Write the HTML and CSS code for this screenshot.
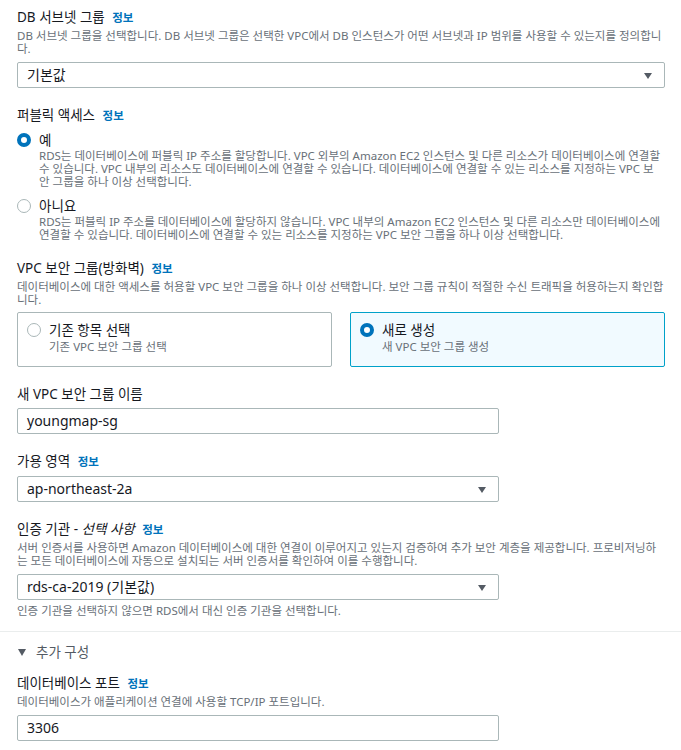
FILE: index.html
```html
<!DOCTYPE html>
<html lang="ko">
<head>
    <meta charset="UTF-8">
    <title>RDS 연결</title>
    <link rel="stylesheet" href="styles.css">
</head>
<body>
    <div class="form">
        <div class="field">
            <div class="label">DB 서브넷 그룹 <a class="info">정보</a></div>
            <div class="desc">DB 서브넷 그룹을 선택합니다. DB 서브넷 그룹은 선택한 VPC에서 DB 인스턴스가 어떤 서브넷과 IP 범위를 사용할 수 있는지를 정의합니다.</div>
            <div class="select wide">기본값<span class="caret"></span></div>
        </div>

        <div class="field">
            <div class="label">퍼블릭 액세스 <a class="info">정보</a></div>
            <div class="radio-item">
                <div class="radio-row"><span class="radio checked"></span>예</div>
                <div class="desc indent">RDS는 데이터베이스에 퍼블릭 IP 주소를 할당합니다. VPC 외부의 Amazon EC2 인스턴스 및 다른 리소스가 데이터베이스에 연결할 수 있습니다. VPC 내부의 리소스도 데이터베이스에 연결할 수 있습니다. 데이터베이스에 연결할 수 있는 리소스를 지정하는 VPC 보안 그룹을 하나 이상 선택합니다.</div>
            </div>
            <div class="radio-item">
                <div class="radio-row"><span class="radio"></span>아니요</div>
                <div class="desc indent">RDS는 퍼블릭 IP 주소를 데이터베이스에 할당하지 않습니다. VPC 내부의 Amazon EC2 인스턴스 및 다른 리소스만 데이터베이스에 연결할 수 있습니다. 데이터베이스에 연결할 수 있는 리소스를 지정하는 VPC 보안 그룹을 하나 이상 선택합니다.</div>
            </div>
        </div>

        <div class="field">
            <div class="label">VPC 보안 그룹(방화벽) <a class="info">정보</a></div>
            <div class="desc">데이터베이스에 대한 액세스를 허용할 VPC 보안 그룹을 하나 이상 선택합니다. 보안 그룹 규칙이 적절한 수신 트래픽을 허용하는지 확인합니다.</div>
            <div class="tiles">
                <div class="tile">
                    <span class="radio"></span>
                    <div>
                        <div class="tile-title">기존 항목 선택</div>
                        <div class="tile-sub">기존 VPC 보안 그룹 선택</div>
                    </div>
                </div>
                <div class="tile selected">
                    <span class="radio checked"></span>
                    <div>
                        <div class="tile-title">새로 생성</div>
                        <div class="tile-sub">새 VPC 보안 그룹 생성</div>
                    </div>
                </div>
            </div>
        </div>

        <div class="field">
            <div class="label">새 VPC 보안 그룹 이름</div>
            <div class="input">youngmap-sg</div>
        </div>

        <div class="field">
            <div class="label">가용 영역 <a class="info">정보</a></div>
            <div class="select">ap-northeast-2a<span class="caret"></span></div>
        </div>

        <div class="field last">
            <div class="label">인증 기관 - <i>선택 사항</i> <a class="info">정보</a></div>
            <div class="desc">서버 인증서를 사용하면 Amazon 데이터베이스에 대한 연결이 이루어지고 있는지 검증하여 추가 보안 계층을 제공합니다. 프로비저닝하는 모든 데이터베이스에 자동으로 설치되는 서버 인증서를 확인하여 이를 수행합니다.</div>
            <div class="select">rds-ca-2019 (기본값)<span class="caret"></span></div>
            <div class="hint">인증 기관을 선택하지 않으면 RDS에서 대신 인증 기관을 선택합니다.</div>
        </div>
    </div>

    <div class="expander">
        <div class="expander-head"><span class="tri"></span>추가 구성</div>
        <div class="field">
            <div class="label">데이터베이스 포트 <a class="info">정보</a></div>
            <div class="desc">데이터베이스가 애플리케이션 연결에 사용할 TCP/IP 포트입니다.</div>
            <div class="input">3306</div>
        </div>
    </div>
</body>
</html>
```
FILE: styles.css
```css
* { margin: 0; padding: 0; box-sizing: border-box; }
body {
    font-family: "Noto Sans", "Noto Sans CJK KR", sans-serif;
    background: #fff;
    color: #16191f;
    width: 681px;
}
.form {
    padding: 8px 17px 0 17px;
}
.field {
    margin-bottom: 18px;
}
.field.last {
    margin-bottom: 14px;
}
.label {
    font-size: 13.5px;
    line-height: 18px;
    color: #16191f;
}
.label i {
    font-style: italic;
}
.info {
    color: #0073bb;
    font-weight: bold;
    font-size: 11.5px;
    margin-left: 4px;
}
.desc {
    font-size: 11.5px;
    line-height: 13px;
    color: #687078;
    margin-top: 2px;
}
.desc.indent {
    padding-left: 22px;
    margin-top: 0;
}
.select, .input {
    position: relative;
    height: 26px;
    border: 1px solid #aab7b8;
    border-radius: 2px;
    font-size: 14px;
    line-height: 24px;
    padding: 0 9px;
    margin-top: 5px;
    width: 482px;
}
.desc + .select, .desc + .input {
    margin-top: 7px;
}
.select.wide {
    width: 648px;
}
.caret {
    position: absolute;
    right: 12px;
    top: 10px;
    width: 0;
    height: 0;
    border-left: 4px solid transparent;
    border-right: 4px solid transparent;
    border-top: 6px solid #545b64;
}
.hint {
    font-size: 11.5px;
    line-height: 13px;
    color: #687078;
    margin-top: 4px;
}
.radio-item {
    margin-top: 6px;
}
.radio-item + .radio-item {
    margin-top: 9px;
}
.radio-row {
    display: flex;
    align-items: center;
    font-size: 13.5px;
    line-height: 18px;
}
.radio {
    display: inline-block;
    width: 14px;
    height: 14px;
    border-radius: 50%;
    border: 1px solid #aab7b8;
    margin-right: 8px;
    flex-shrink: 0;
    background: #fff;
}
.radio.checked {
    border: 4px solid #0073bb;
}
.tiles {
    display: grid;
    grid-template-columns: 315px 315px;
    gap: 18px;
    margin-top: 6px;
}
.tile {
    display: flex;
    align-items: flex-start;
    height: 55px;
    border: 1px solid #aab7b8;
    border-radius: 2px;
    padding: 8px 9px;
}
.tile .radio {
    margin-top: 2px;
}
.tile.selected {
    border-color: #00a1c9;
    background: #f1faff;
}
.tile-title {
    font-size: 13.5px;
    line-height: 18px;
}
.tile-sub {
    font-size: 11.5px;
    line-height: 15px;
    color: #687078;
}
.expander {
    border-top: 1px solid #eaeded;
    padding: 11px 17px 0 17px;
}
.expander-head {
    display: flex;
    align-items: center;
    font-size: 13.5px;
    line-height: 18px;
    color: #545b64;
    margin-bottom: 13px;
}
.tri {
    width: 0;
    height: 0;
    border-left: 4px solid transparent;
    border-right: 4px solid transparent;
    border-top: 7px solid #545b64;
    margin: 0 10px 0 1px;
}
```
